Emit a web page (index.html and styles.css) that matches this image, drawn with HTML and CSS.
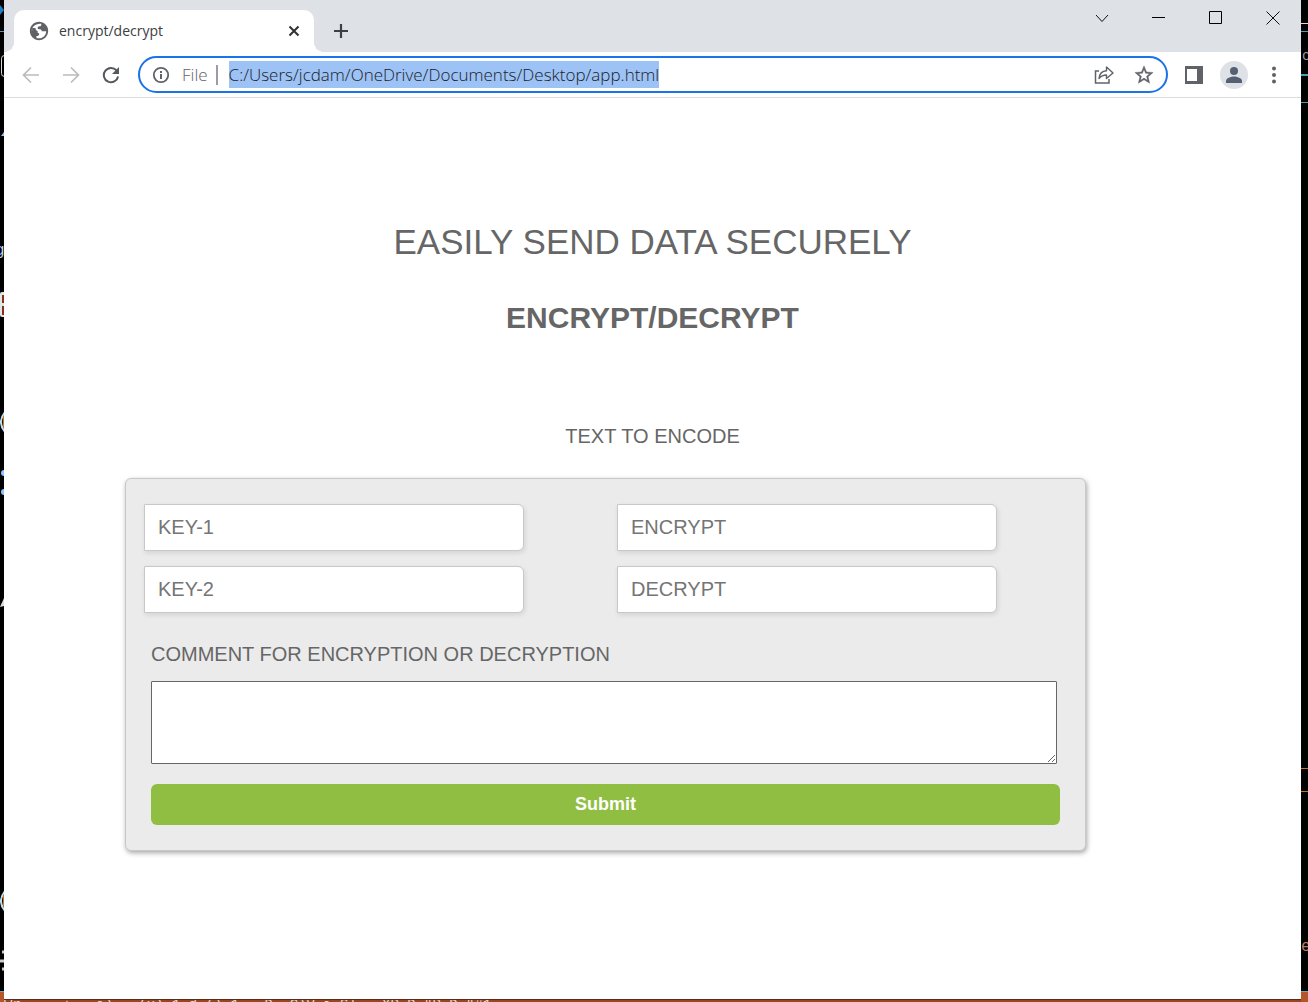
FILE: index.html
```html
<!DOCTYPE html>
<html lang="en">
<head>
<meta charset="utf-8">
<title>encrypt/decrypt</title>
<link rel="stylesheet" href="styles.css">
</head>
<body>
<div class="desktop">
  <svg class="rail" aria-hidden="true">
    <path d="M0 5l4 5-4 5z" fill="#1b7fc4"/>
    <path d="M0 31.500h4" stroke="#4f9db5"/>
    <rect x="1.500" y="55.500" width="8" height="21" rx="3" fill="none" stroke="#d8d8d8"/>
    <path d="M1 136l3-4v4z" fill="#8ec5ff"/>
    <text x="-5" y="255">g</text>
    <rect x="0" y="292" width="6" height="25" rx="2" fill="#dce8e8"/>
    <path d="M3 295v8M3 306v9" stroke="#8c2d16" stroke-width="2"/>
    <path d="M5 412q-8 10 0 20" fill="none" stroke="#b9e0f5" stroke-width="2"/>
    <path d="M3.500 416v12" stroke="#c47a1f"/>
    <circle cx="4" cy="473" r="3" fill="#8ec5ff"/>
    <circle cx="4" cy="492" r="3" fill="#8ec5ff"/>
    <path d="M0 607l4-9v8z" fill="#ddd"/>
    <path d="M5 891q-8 10 0 20" fill="none" stroke="#b9e0f5" stroke-width="2"/>
    <path d="M3.500 895v12" stroke="#c47a1f"/>
    <path d="M2 952h2M0 961h4M2 969h2" stroke="#ccc" stroke-width="3"/>
    <path d="M0 991.500h4" stroke="#5fb0c4"/>
    <path d="M0 992h4v10H0z" fill="#b4552a"/>
  </svg>

  <div class="window">
    <header class="tab-strip">
      <div class="tab">
        <svg class="favicon" viewBox="0 0 24 24" aria-hidden="true"><path fill="#5f6368" d="M12 2C6.480 2 2 6.480 2 12s4.480 10 10 10 10-4.480 10-10S17.520 2 12 2z"/><path fill="#fff" d="M14.500 4c.3 1.800-.6 2.700-2 2.900-1.400.1-1.900.7-1.900 1.700 0 1.200.8 1.500 2.200 1.500 1.500 0 2.200.8 2.200 2.200h4.800c.2 4-3.300 7.700-7.800 7.700-1.200 0-2-.2-2.800-.5v-2c1.800 0 3-.6 3-1.900 0-1.400-1.200-1.800-2.700-1.800-1.600 0-2.300-.9-2.800-2.300H4c0 .5 0 1 .1 1.500C3.500 8 7.500 3.500 14.500 4z"/><path fill="#5f6368" d="M4.500 8.500l4 .5v2l2 1v2l-1.500 1-4.500-3z"/></svg>
        <span class="tab-title">encrypt/decrypt</span>
        <button class="icon-button tab-close" aria-label="Close tab"><svg width="12" height="12" viewBox="0 0 12 12"><path d="M1.500 1.500l9 9m0-9l-9 9" stroke="#303134" stroke-width="2"/></svg></button>
      </div>
      <button class="icon-button new-tab" aria-label="New tab"><svg width="16" height="16" viewBox="0 0 16 16"><path d="M8 1v14M1 8h14" stroke="#3c4043" stroke-width="2.200"/></svg></button>
      <div class="window-controls">
        <button class="icon-button" aria-label="Search tabs"><svg width="14" height="14" viewBox="0 0 14 14"><path d="M1 4l6 6.500L13 4" fill="none" stroke="#111"/></svg></button>
        <button class="icon-button" aria-label="Minimize"><svg width="13" height="13" viewBox="0 0 13 13"><path d="M0 6.500h13" stroke="#000"/></svg></button>
        <button class="icon-button" aria-label="Maximize"><svg width="13" height="13" viewBox="0 0 13 13"><path d="M.5.5h12v12H.5z" fill="none" stroke="#000"/></svg></button>
        <button class="icon-button" aria-label="Close"><svg width="14" height="14" viewBox="0 0 14 14"><path d="M.5.5l13 13m0-13l-13 13" stroke="#111"/></svg></button>
      </div>
    </header>

    <nav class="toolbar" aria-label="Navigation">
      <div class="history">
        <button class="icon-button" aria-label="Back"><svg width="18" height="18" viewBox="0 0 18 18"><path d="M17 9H2m7-7.500L1.500 9 9 16.500" fill="none" stroke="#babcbe" stroke-width="1.700"/></svg></button>
        <button class="icon-button" aria-label="Forward"><svg width="18" height="18" viewBox="0 0 18 18"><path d="M1 9h15M9 1.500L16.500 9 9 16.500" fill="none" stroke="#babcbe" stroke-width="1.700"/></svg></button>
        <button class="icon-button" aria-label="Reload"><svg width="18" height="18" viewBox="0 0 18 18"><path d="M14.500 4.400A7.200 7.200 0 1 0 16.100 10.500" fill="none" stroke="#55585c" stroke-width="2"/><path d="M17 1v7h-7z" fill="#55585c"/></svg></button>
      </div>
      <div class="address">
        <svg width="18" height="18" viewBox="0 0 18 18" aria-hidden="true"><circle cx="9" cy="9" r="7.200" fill="none" stroke="#5f6368" stroke-width="1.800"/><path d="M9 8v5M9 5v2" stroke="#5f6368" stroke-width="2"/></svg>
        <label class="scheme" for="url">File</label>
        <input class="url" id="url" type="text" value="C:/Users/jcdam/OneDrive/Documents/Desktop/app.html">
        <div class="address-actions">
          <button class="icon-button" aria-label="Share"><svg width="20" height="20" viewBox="0 0 20 20"><path d="M5 6H1.500v12h13.500v-4" fill="none" stroke="#5f6368" stroke-width="1.500"/><path d="M5 13.500c.5-5 3-7.500 7.500-7.800V2L19 8l-6.500 5.500V10C9 10 7 11 5 13.500z" fill="none" stroke="#5f6368" stroke-width="1.400" stroke-linejoin="round"/></svg></button>
          <button class="icon-button" aria-label="Bookmark"><svg width="22" height="22" viewBox="0 0 24 24"><path fill="#5f6368" stroke="#5f6368" stroke-width=".4" d="M22 9.240l-7.190-.62L12 2 9.190 8.630 2 9.240l5.460 4.730L5.820 21 12 17.270 18.180 21l-1.630-7.030L22 9.240zM12 15.400l-3.760 2.270 1-4.280-3.320-2.880 4.380-.38L12 6.100l1.710 4.040 4.380.38-3.320 2.880 1 4.280L12 15.400z"/></svg></button>
        </div>
      </div>
      <div class="tools">
        <button class="icon-button" aria-label="Side panel"><svg width="18" height="18" viewBox="0 0 18 18"><path fill="#5f6368" fill-rule="evenodd" d="M0 0h18v18H0zM2 3v12h10V3z"/></svg></button>
        <button class="icon-button" aria-label="Profile"><svg width="28" height="28" viewBox="0 0 28 28"><circle cx="14" cy="14" r="14" fill="#dee1e6"/><circle cx="14" cy="10" r="4" fill="#566073"/><path d="M6 22v-2c0-3 5-4.500 8-4.500s8 1.500 8 4.500v2z" fill="#566073"/></svg></button>
        <button class="icon-button" aria-label="Menu"><svg width="18" height="18" viewBox="0 0 18 18" fill="#5f6368"><circle cx="9" cy="2.500" r="2"/><circle cx="9" cy="9" r="2"/><circle cx="9" cy="15.500" r="2"/></svg></button>
      </div>
    </nav>

    <main class="page">
      <h1>EASILY SEND DATA SECURELY</h1>
      <h2>ENCRYPT/DECRYPT</h2>
      <p class="intro">TEXT TO ENCODE</p>
      <form class="card">
        <div class="fields">
          <input class="field" type="text" placeholder="KEY-1" aria-label="Key 1">
          <input class="field" type="text" placeholder="ENCRYPT" aria-label="Encrypt">
          <input class="field" type="text" placeholder="KEY-2" aria-label="Key 2">
          <input class="field" type="text" placeholder="DECRYPT" aria-label="Decrypt">
        </div>
        <div class="comment-group">
          <label for="comment">COMMENT FOR ENCRYPTION OR DECRYPTION</label>
          <textarea class="comment" id="comment"></textarea>
          <button class="submit" type="submit">Submit</button>
        </div>
      </form>
    </main>
  </div>

  <svg class="rail" aria-hidden="true">
    <path d="M0 23.500h7" stroke="#ddd"/>
    <path d="M0 31.500h7M0 102.500h7" stroke="#4f9db5"/>
    <path d="M0 75h7" stroke="#4f9db5" stroke-width="2"/>
    <text x="1" y="60" class="glyph-right">c</text>
    <path d="M0 768.500h7M0 791.500h7" stroke="#c8731f"/>
    <text x="0" y="951" class="glyph-right glyph-orange">e</text>
    <path d="M0 991.500h7" stroke="#5fb0c4"/>
    <path d="M0 992h7v10H0z" fill="#b4552a"/>
  </svg>

  <footer class="status" aria-hidden="true">Wr &nbsp; · + &nbsp; i) &nbsp; (x) 1 d () 1 &nbsp; D. C)V i Sl &nbsp; XP D "P D "#1</footer>
</div>
</body>
</html>
```
FILE: styles.css
```css
* {
  box-sizing: border-box;
}

body {
  margin: 0;
  font-family: "Liberation Sans", Arial, sans-serif;
  color: #666;
}

.desktop {
  display: grid;
  grid-template: 1fr 3px / 4px minmax(0, 1fr) 7px;
  min-height: 100vh;
  background: #000;
}

.rail {
  width: 100%;
  height: 100%;
  grid-row: 1 / 3;
  overflow: hidden;
  font: 16px "Liberation Mono", monospace;
  fill: #b9d8ff;
}

.rail:first-child {
  grid-column: 1;
}

.glyph-right {
  font-size: 14px;
  fill: #999;
}

.glyph-orange {
  font-size: 16px;
  fill: #c47a5a;
}

.status {
  grid-row: 2;
  grid-column: 2;
  height: 3px;
  overflow: hidden;
  background: #99451f;
  border-top: 1px solid #5a2d1a;
  color: #ddd;
  font: 14px/10px "Liberation Mono", monospace;
  white-space: nowrap;
}

.window {
  grid-row: 1;
  grid-column: 2;
  display: flex;
  flex-direction: column;
  background: #fff;
}

.icon-button {
  display: flex;
  align-items: center;
  justify-content: center;
  flex: none;
  padding: 0;
  border: 0;
  background: none;
}

.tab-strip {
  display: flex;
  align-items: flex-end;
  height: 52px;
  padding-left: 10px;
  background: #dee1e6;
}

.tab {
  position: relative;
  display: flex;
  align-items: center;
  width: 300px;
  height: 42px;
  padding: 0 14px;
  border-radius: 10px 10px 0 0;
  background: #fff;
}

.tab::before,
.tab::after {
  content: "";
  position: absolute;
  bottom: 0;
  width: 10px;
  height: 10px;
}

.tab::before {
  right: 100%;
  background: radial-gradient(circle at 0 0, transparent 10px, #fff 10px);
}

.tab::after {
  left: 100%;
  background: radial-gradient(circle at 100% 0, transparent 10px, #fff 10px);
}

.favicon {
  width: 22px;
  height: 22px;
}

.tab-title {
  margin-left: 9px;
  color: #3c4043;
  font: 14px/20px "Open Sans", sans-serif;
}

.tab-close {
  margin-left: auto;
}

.new-tab {
  width: 36px;
  height: 42px;
  margin-left: 9px;
}

.window-controls {
  display: flex;
  align-self: flex-start;
  height: 35px;
  margin-left: auto;
}

.window-controls .icon-button {
  width: 57px;
}

.toolbar {
  display: flex;
  align-items: center;
  height: 46px;
  border-bottom: 1px solid #dadce0;
}

.history {
  display: flex;
  gap: 22px;
  padding: 0 18px;
}

.address {
  flex: 1;
  display: flex;
  align-items: center;
  min-width: 0;
  height: 37px;
  padding: 0 11px 0 12px;
  border: 2px solid #1a73e8;
  border-radius: 19px;
}

.scheme {
  margin-left: 12px;
  padding-right: 8px;
  border-right: 2px solid #9a9da1;
  color: #5f6368;
  font: 300 17px/20px "Open Sans", sans-serif;
}

.url {
  field-sizing: content;
  min-width: 0;
  height: 27px;
  margin-left: 11px;
  padding: 0;
  border: 0;
  background: #9cc2f6;
  color: #202124;
  font: 300 17px/27px "Open Sans", sans-serif;
}

.address-actions {
  display: flex;
  align-items: center;
  gap: 19px;
  margin-left: auto;
}

.tools {
  display: flex;
  align-items: center;
  gap: 17px;
  padding: 0 18px 0 17px;
}

.page {
  flex: 1;
  padding: 122px 0 40px;
}

h1,
h2,
.intro {
  margin: 0;
  text-align: center;
}

h1 {
  font-size: 35px;
  line-height: 44px;
  font-weight: 400;
}

h2 {
  margin-top: 36px;
  font-size: 30px;
  line-height: 36px;
}

.intro {
  margin-top: 88px;
  font-size: 20px;
  line-height: 24px;
}

.card {
  margin: 30px 215px 0 121px;
  padding: 25px 25px 25px 18px;
  border: 1px solid #c8c8c8;
  border-radius: 6px;
  background: #ebebeb;
  box-shadow: 1px 2px 5px rgba(0, 0, 0, 0.35);
}

.fields {
  display: grid;
  grid-template-columns: 1fr 1fr;
  gap: 15px 93px;
  padding-right: 63px;
}

.field {
  width: 100%;
  height: 47px;
  padding: 0 13px;
  border: 1px solid #c8c8c8;
  border-radius: 0 6px 6px 0;
  background: #fff;
  box-shadow: 1px 2px 5px rgba(0, 0, 0, 0.1);
  font: 20px "Liberation Sans", Arial, sans-serif;
}

.field::placeholder {
  color: #757575;
}

.comment-group {
  display: flex;
  flex-direction: column;
  margin-top: 29px;
  padding-left: 7px;
  font-size: 20px;
  line-height: 24px;
}

.comment {
  height: 83px;
  margin: 15px 3px 20px 0;
  border: 1px solid #666;
  border-radius: 1px;
  background: #fff;
}

.submit {
  height: 41px;
  border: 0;
  border-radius: 6px;
  background: #8fbe43;
  color: #fff;
  font: bold 18px "Liberation Sans", Arial, sans-serif;
}
```
